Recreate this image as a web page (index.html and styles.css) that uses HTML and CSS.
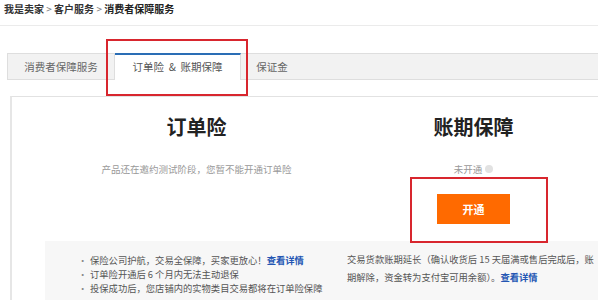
FILE: index.html
```html
<!DOCTYPE html>
<html lang="zh-CN">
<head>
<meta charset="utf-8">
<link rel="stylesheet" href="styles.css">
</head>
<body>
<div class="page">
  <div class="crumb">我是卖家 <span class="sep">&gt;</span> 客户服务 <span class="sep">&gt;</span> <b>消费者保障服务</b></div>
  <div class="tabs">
    <div class="tab tab1">消费者保障服务</div>
    <div class="tab tab-active">订单险 &nbsp;&amp;&nbsp; 账期保障</div>
    <div class="tab tab3">保证金</div>
  </div>
  <div class="card">
    <div class="cols">
      <div class="col">
        <div class="title">订单险</div>
        <div class="sub">产品还在邀约测试阶段，您暂不能开通订单险</div>
      </div>
      <div class="col">
        <div class="title">账期保障</div>
        <div class="sub">未开通 <span class="info"></span></div>
        <button class="btn">开通</button>
      </div>
    </div>
    <div class="notes">
      <ul class="list">
        <li>保险公司护航，交易全保障，买家更放心！<a class="link">查看详情</a></li>
        <li>订单险开通后 6 个月内无法主动退保</li>
        <li>投保成功后，您店铺内的实物类目交易都将在订单险保障</li>
      </ul>
      <div class="rtext">交易货款账期延长（确认收货后 15 天届满或售后完成后，账<br>期解除，资金转为支付宝可用余额）。<a class="link">查看详情</a></div>
    </div>
  </div>
</div>
<div class="mark mark1"></div>
<div class="mark mark2"></div>
</body>
</html>
```
FILE: styles.css
```css
html, body {
  margin: 0;
  padding: 0;
  background: #fff;
  overflow: hidden;
  width: 598px;
  height: 300px;
}
body {
  font-family: "Noto Sans CJK SC", "Microsoft YaHei", sans-serif;
  color: #333;
  position: relative;
}
.page {
  width: 760px;
}
.crumb {
  height: 25px;
  line-height: 18px;
  padding-left: 4px;
  font-size: 10px;
  font-weight: 700;
  color: #333;
  border-bottom: 1px solid #ebebeb;
  white-space: nowrap;
}
.crumb .sep {
  color: #777;
  font-weight: 400;
}
.crumb b {
  font-weight: 700;
  color: #222;
}
.tabs {
  margin-top: 27px;
  margin-left: 7px;
  height: 25px;
  display: flex;
  background: #f2f2f2;
  border-top: 1px solid #dedede;
  border-bottom: 1px solid #dedede;
}
.tab {
  box-sizing: border-box;
  height: 25px;
  line-height: 25px;
  font-size: 10.5px;
  color: #666;
  text-align: center;
  border-right: 1px solid #dedede;
  white-space: nowrap;
}
.tab1 {
  width: 108px;
  border-left: 1px solid #dedede;
}
.tab-active {
  width: 126px;
  background: #fff;
  border-top: 2px solid #2a6db5;
  margin-top: -1px;
  height: 27px;
  line-height: 24px;
  color: #555;
}
.tab3 {
  width: 62px;
  border-right: none;
}
.card {
  margin-top: 16px;
  margin-left: 10px;
  height: 240px;
  border: 1px solid #e2e2e2;
  border-left: 2px solid #e6e6e6;
  border-right: none;
}
.cols {
  display: grid;
  grid-template-columns: 277px 277px;
  padding-left: 46px;
  padding-top: 16px;
}
.col {
  display: flex;
  flex-direction: column;
  align-items: center;
}
.title {
  font-size: 20px;
  line-height: 28px;
  font-weight: 700;
  color: #222;
}
.sub {
  margin-top: 21px;
  font-size: 9.5px;
  line-height: 14px;
  color: #999;
  white-space: nowrap;
  display: flex;
  align-items: center;
  gap: 3px;
}
.info {
  width: 8px;
  height: 8px;
  border-radius: 50%;
  background: #e2e2e2;
  display: inline-block;
}
.btn {
  margin-top: 18px;
  width: 73px;
  height: 30px;
  border: none;
  background: #ff6a00;
  color: #fff;
  font-family: inherit;
  font-size: 11px;
  font-weight: 700;
  padding: 0;
}
.notes {
  margin-top: 17px;
  margin-left: 33px;
  background: #f7f7f7;
  height: 80px;
  display: flex;
  font-size: 9.3px;
  color: #555;
}
.list {
  list-style: none;
  margin: 0;
  padding: 12px 23px 0 33px;
  width: 246px;
  line-height: 14px;
}
.list li {
  position: relative;
  padding-left: 12px;
  white-space: nowrap;
}
.list li::before {
  content: "•";
  position: absolute;
  left: 0;
  color: #888;
}
.rtext {
  padding-top: 9px;
  white-space: nowrap;
  line-height: 18px;
}
.link {
  color: #2456b3;
  font-weight: 700;
}
.mark {
  position: absolute;
  border: 2px solid #d8262e;
  box-sizing: border-box;
}
.mark1 {
  left: 106px;
  top: 39px;
  width: 142px;
  height: 57px;
}
.mark2 {
  left: 410px;
  top: 177px;
  width: 138px;
  height: 66px;
}
```
